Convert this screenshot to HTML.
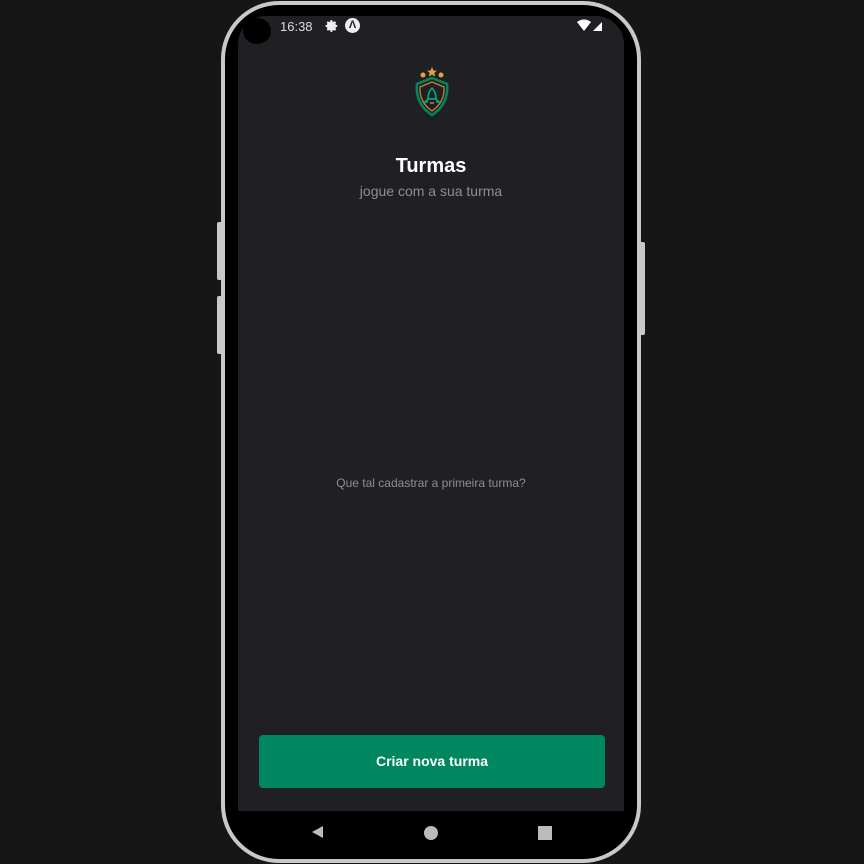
<!DOCTYPE html>
<html><head><meta charset="utf-8"><style>
body{margin:0;width:864px;height:864px;background:#161616;position:relative;overflow:hidden;font-family:"Liberation Sans",Roboto,sans-serif}
.btn{position:absolute;background:#c8c8c8;border-radius:2px}
.frame{position:absolute;left:221px;top:1px;width:420px;height:862px;box-sizing:border-box;border:4px solid #c9c9c9;border-radius:58px;background:#000}
.screen{position:absolute;left:238px;top:16px;width:386px;height:795px;background:#202024;border-radius:28px 28px 0 0;overflow:hidden}
.nav{position:absolute;left:238px;top:811px;width:386px;height:40px;background:#000;border-radius:0 0 40px 40px}
</style></head><body>
<div class="btn" style="left:217px;top:222px;width:6px;height:58px"></div>
<div class="btn" style="left:217px;top:296px;width:6px;height:58px"></div>
<div class="btn" style="left:639px;top:242px;width:6px;height:93px"></div>
<div class="frame"></div>
<div class="screen">
 <div style="position:absolute;left:42px;top:3px;color:#ddd;font-size:13px">16:38</div>
 <svg style="position:absolute;left:87px;top:3px" width="14" height="14" viewBox="0 0 24 24"><path fill="#eee" d="M12 8a4 4 0 100 8 4 4 0 000-8zm9 5.5v-3l-2.4-.6-.8-1.9 1.3-2.1-2.1-2.1-2.1 1.3-1.9-.8L12.5 2h-3l-.6 2.4-1.9.8-2.1-1.3-2.1 2.1 1.3 2.1-.8 1.9L1 10.5v3l2.4.6.8 1.9-1.3 2.1 2.1 2.1 2.1-1.3 1.9.8.5 2.3h3l.6-2.4 1.9-.8 2.1 1.3 2.1-2.1-1.3-2.1.8-1.9z"/></svg>
 <div style="position:absolute;left:107px;top:2px;width:15px;height:15px;border-radius:50%;background:#eee;color:#202024;font-size:11px;font-weight:bold;text-align:center;line-height:15px">Λ</div>
 <svg style="position:absolute;left:338px;top:3px" width="32" height="14" viewBox="0 0 32 14"><path fill="#fff" d="M1 3 Q8 -2 15 3 L8 12Z"/><path fill="#fff" d="M17 12 L26 3 V12Z"/></svg>
 <svg style="position:absolute;left:174px;top:50px" width="40" height="52" viewBox="0 0 40 52">
  <g fill="#e0a040"><polygon points="20,1 21.5,4.5 25,4.8 22.3,7 23.2,10.5 20,8.6 16.8,10.5 17.7,7 15,4.8 18.5,4.5"/><circle cx="11" cy="9" r="2.5"/><circle cx="29" cy="9" r="2.5"/></g>
  <path d="M20 12 L35 18 Q37 38 20 49 Q3 38 5 18Z" fill="none" stroke="#00875f" stroke-width="2.5"/>
  <path d="M20 16 L32 21 Q33 36 20 45 Q7 36 8 21Z" fill="none" stroke="#c08038" stroke-width="1.3"/>
  <path d="M20 22 Q24 26 24 33 L16 33 Q16 26 20 22Z M16 33 L13 36 L16 36 M24 33 L27 36 L24 36" fill="none" stroke="#00b37e" stroke-width="1.5"/>
  <path d="M18 37 L22 37" stroke="#c08038" stroke-width="1.5"/>
 </svg>
 <div style="position:absolute;left:0;width:386px;top:139px;text-align:center;color:#fff;font-weight:bold;font-size:20px">Turmas</div>
 <div style="position:absolute;left:0;width:386px;top:167px;text-align:center;color:#8d8d99;font-size:14px">jogue com a sua turma</div>
 <div style="position:absolute;left:0;width:386px;top:460px;text-align:center;color:#8d8d99;font-size:12px">Que tal cadastrar a primeira turma?</div>
 <div style="position:absolute;left:21px;top:719px;width:346px;height:53px;background:#00875f;border-radius:4px;color:#fff;font-weight:bold;font-size:14px;text-align:center;line-height:53px">Criar nova turma</div>
</div>
<div style="position:absolute;left:243px;top:18px;width:28px;height:26px;background:#000;border-radius:50%"></div>
<div class="nav"></div>
<svg style="position:absolute;left:310px;top:825px" width="14" height="14"><polygon points="13,1 13,13 2,7" fill="#bbb"/></svg>
<div style="position:absolute;left:424px;top:826px;width:14px;height:14px;border-radius:50%;background:#bbb"></div>
<div style="position:absolute;left:538px;top:826px;width:14px;height:14px;background:#bbb"></div>
</body></html>
